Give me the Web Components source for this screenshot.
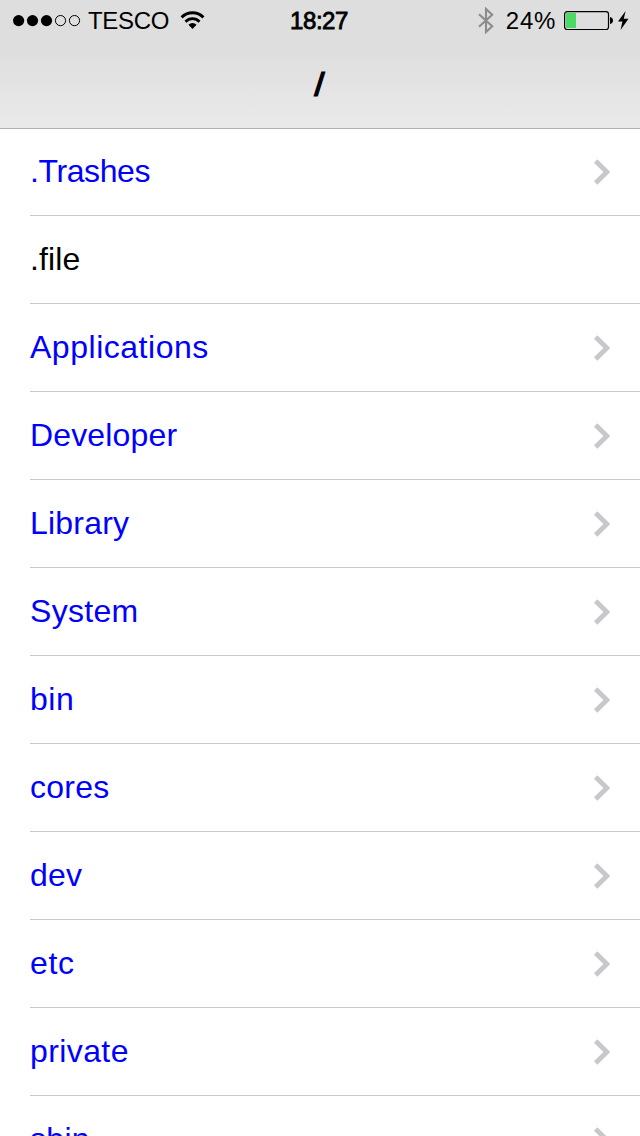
<!DOCTYPE html>
<html lang="en">
<head>
<meta charset="utf-8">
<title>/</title>
<style>
html, body { margin: 0; height: 100%; overflow: hidden; background: #fff; }
body { font-family: "Liberation Sans", Arial, sans-serif; color: #000; }
</style>
</head>
<body>
<file-browser></file-browser>
<script>
const define = (name, html, setup) => {
  const template = document.createElement('template');
  template.innerHTML = html;
  customElements.define(name, class extends HTMLElement {
    constructor() {
      super();
      this.attachShadow({ mode: 'open' }).append(template.content.cloneNode(true));
    }
    connectedCallback() { if (setup) setup(this, this.shadowRoot); }
  });
};

define('signal-dots', `
<style>:host { display: block; width: 68px; height: 12px; } svg { display: block; }</style>
<svg width="68" height="12" viewBox="0 0 68 12">
  <g><circle cx="5.6" cy="5.6" r="5.6"/><circle cx="19.5" cy="5.6" r="5.6"/><circle cx="33.5" cy="5.6" r="5.6"/></g>
  <g fill="none" stroke="#000"><circle cx="47.5" cy="5.6" r="5.1"/><circle cx="61.5" cy="5.6" r="5.1"/></g>
</svg>`);

define('wifi-icon', `
<style>:host { display: block; } svg { display: block; }</style>
<svg width="25" height="18" viewBox="0 0 26 18" preserveAspectRatio="none">
  <g fill="none" stroke="#000" stroke-width="2.9">
    <path d="M1.6 6.4a16.2 16.2 0 0 1 22.8 0"/>
    <path d="M5.7 10.7a10.3 10.3 0 0 1 14.6 0"/>
  </g>
  <path d="M13 18l-4.2-4.3a6.2 6.2 0 0 1 8.4 0z"/>
</svg>`);

define('bluetooth-icon', `
<style>:host { display: block; } svg { display: block; }</style>
<svg width="16" height="27" viewBox="0 0 16 27">
  <path d="M1 7.2L14.2 19.2L8 25V2L14.2 7.8L1 19.8" fill="none" stroke="#8b8b8b" stroke-width="2.1"/>
</svg>`);

define('battery-icon', `
<style>:host { display: block; } svg { display: block; }</style>
<svg width="50" height="20" viewBox="0 0 50 20">
  <rect x=".6" y=".6" width="43.9" height="17.9" rx="2.5" fill="none" stroke="#000" stroke-width="1.2"/>
  <rect x="2" y="2" width="10" height="15" fill="#4cd964"/>
  <path d="M46 6c2 .3 3 1.6 3 3.5s-1 3.2-3 3.5z"/>
</svg>`);

define('charging-bolt', `
<style>:host { display: block; } svg { display: block; }</style>
<svg width="11" height="19" viewBox="0 0 11 19"><path d="M7.6 0L0 10.5h4.4L2.6 19L10.5 7.8H5.8z"/></svg>`);

define('status-bar', `
<style>
:host { display: grid; grid-template-columns: 1fr auto 1fr; height: 40px; font-size: 24px; line-height: 40px; white-space: nowrap; }
.side { display: flex; align-items: center; height: 40px; }
.left { padding-left: 13px; }
.right { justify-content: flex-end; padding-right: 11px; }
signal-dots { margin: 1px 7px 0 0; }
.carrier { letter-spacing: -.3px; margin-right: 10.5px; padding-top: 1px; }
.time { letter-spacing: -.45px; padding: 1px 2px 0 0; -webkit-text-stroke: .8px #000; }
bluetooth-icon { margin-right: 12px; }
.level { letter-spacing: .7px; margin-right: 8px; padding-top: 1px; }
battery-icon { margin: 2px 4px 0 0; }
</style>
<div class="side left"><signal-dots></signal-dots><span class="carrier">TESCO</span><wifi-icon></wifi-icon></div>
<span class="time">18:27</span>
<div class="side right"><bluetooth-icon></bluetooth-icon><span class="level">24%</span><battery-icon></battery-icon><charging-bolt></charging-bolt></div>`);

define('nav-header', `
<style>
:host { display: flex; flex-direction: column; height: 128px; flex: none; box-shadow: 0 1px #b2b2b2; position: relative; z-index: 1;
  background: linear-gradient(#dedede 0, #dedede 50px, #eaeaea 128px); }
h1 { margin: 0; height: 88px; line-height: 89px; text-align: center; font-size: 33px; font-weight: 400; -webkit-text-stroke: 1.1px #000; }
h1 span { display: inline-block; transform: scaleX(1.14); }
</style>
<status-bar></status-bar>
<h1><span><slot></slot></span></h1>`);

define('file-row', `
<style>
:host { display: flex; height: 88px; flex: none; padding-left: 30px; color: #000; }
:host([folder]) { color: #00f; }
.cell { flex: 1; display: flex; align-items: center; justify-content: space-between; box-sizing: border-box; border-bottom: 1px solid #c8c7cc; padding-right: 30px; }
.name { font-size: 32px; line-height: 36px; letter-spacing: var(--tracking, 0); margin-top: -1px; white-space: nowrap; }
svg { display: none; margin-top: 1px; }
:host([folder]) svg { display: block; }
</style>
<div class="cell"><span class="name"><slot></slot></span>
<svg width="16" height="26" viewBox="0 0 16 26"><path d="M1.7 2L12.8 13L1.7 24" fill="none" stroke="#c7c7cc" stroke-width="4.8"/></svg></div>`);

define('file-browser', `
<style>
:host { display: flex; flex-direction: column; height: 1136px; width: 640px; overflow: hidden; background: #fff; }
main { display: flex; flex-direction: column; flex: 1; min-height: 0; overflow: hidden; }
</style>
<nav-header>/</nav-header>
<main></main>`, (host, root) => {
  const files = [
    ['.Trashes', true, -.4], ['.file', false, .1], ['Applications', true, .52],
    ['Developer', true, .15], ['Library', true, .2], ['System', true, .3],
    ['bin', true, .5], ['cores', true, .25], ['dev', true, .2],
    ['etc', true, .6], ['private', true, .4], ['sbin', true, .3]
  ];
  root.querySelector('main').append(...files.map(([name, folder, tracking]) => {
    const row = document.createElement('file-row');
    row.textContent = name;
    row.toggleAttribute('folder', folder);
    row.style.setProperty('--tracking', tracking + 'px');
    return row;
  }));
});
</script>
</body>
</html>
